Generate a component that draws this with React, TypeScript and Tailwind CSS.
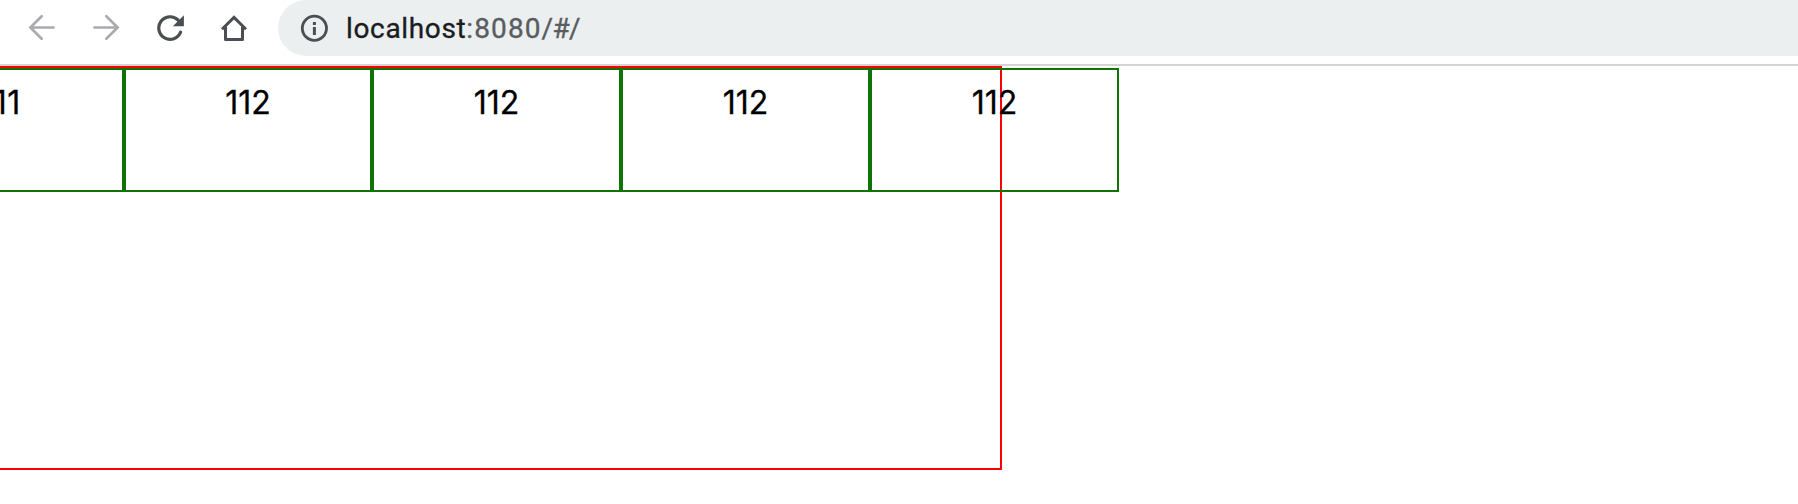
const cells = [
  { label: '111', size: 'w-[249px] pl-[2px] tracking-[0.6px]' },
  { label: '112', size: 'w-[248px]' },
  { label: '112', size: 'w-[249px]' },
  { label: '112', size: 'w-[249px]' },
  { label: '112', size: 'w-[249px]' },
];

function ArrowLeft({ flipped = false }: { flipped?: boolean }) {
  return (
    <svg width="28" height="28" viewBox="0 0 28 28" fill="none" stroke="#a9abae" strokeWidth="2.7" strokeLinecap="round" className={flipped ? 'shrink-0 -scale-x-100' : 'shrink-0'}>
      <path d="M25.5 13.5H2.5M13.7 2.2L2.4 13.5L13.7 24.8" />
    </svg>
  );
}

function Reload() {
  return (
    <svg width="28" height="28" viewBox="0 0 28 28" className="shrink-0">
      <path d="M24.6 18.2A11.3 11.3 0 1 1 22 6" fill="none" stroke="#4b4e53" strokeWidth="3.2" strokeLinecap="round" />
      <path d="M27.9 1.2V12.2H16.9Z" fill="#4b4e53" />
    </svg>
  );
}

function Home() {
  return (
    <svg width="28" height="28" viewBox="0 0 28 28" fill="none" stroke="#4b4e53" strokeWidth="3" strokeLinejoin="round" className="shrink-0">
      <path d="M5.5 12.5V25.5H22.5V12.5" />
      <path d="M2 15.2L14 3.4L26 15.2" strokeLinejoin="miter" />
    </svg>
  );
}

function Info() {
  return (
    <svg width="28" height="28" viewBox="0 0 28 28" fill="none" className="shrink-0">
      <circle cx="14.4" cy="14.3" r="12.1" stroke="#4b4e53" strokeWidth="2.8" />
      <path d="M12.9 8h3v3h-3zM12.9 13h3v8h-3z" fill="#4b4e53" />
    </svg>
  );
}

export default function App() {
  return (
    <div className="h-[504px] w-[1798px] overflow-hidden bg-white font-['Inter','Liberation_Sans',sans-serif]">
      <header className="flex h-[66px] items-start border-b-2 border-[#d4d4d4]">
        <nav className="flex h-14 w-[278px] shrink-0 items-center gap-9 pl-7">
          <ArrowLeft />
          <ArrowLeft flipped />
          <Reload />
          <Home />
        </nav>
        <div className="flex h-14 flex-1 items-center rounded-l-full bg-[#ebeff0] pl-[22px]">
          <Info />
          <span className="ml-[18px] whitespace-pre pt-[2px] font-['Roboto',sans-serif] text-[28px] leading-8 tracking-[0.65px] text-[#1b1c1e] [-webkit-text-stroke:0.35px_currentColor]">
            localhost<span className="tracking-[1.1px] text-[#5a5c5f]">:8080</span><span className="tracking-[-0.7px] text-[#5a5c5f]">/#/</span>
          </span>
        </div>
      </header>
      <main className="h-[404px] w-[1002px] border-t-2 border-r-2 border-b-2 border-[#ff0000]">
        <div className="-ml-[125px] flex w-[1244px]">
          {cells.map(({ label, size }, i) => (
            <div key={i} className={`h-[124px] shrink-0 border-2 border-[#0e7405] pt-3 text-center text-[32px] leading-[42px] text-black [-webkit-text-stroke:0.3px_currentColor] ${size}`}>
              {label}
            </div>
          ))}
        </div>
      </main>
    </div>
  );
}
